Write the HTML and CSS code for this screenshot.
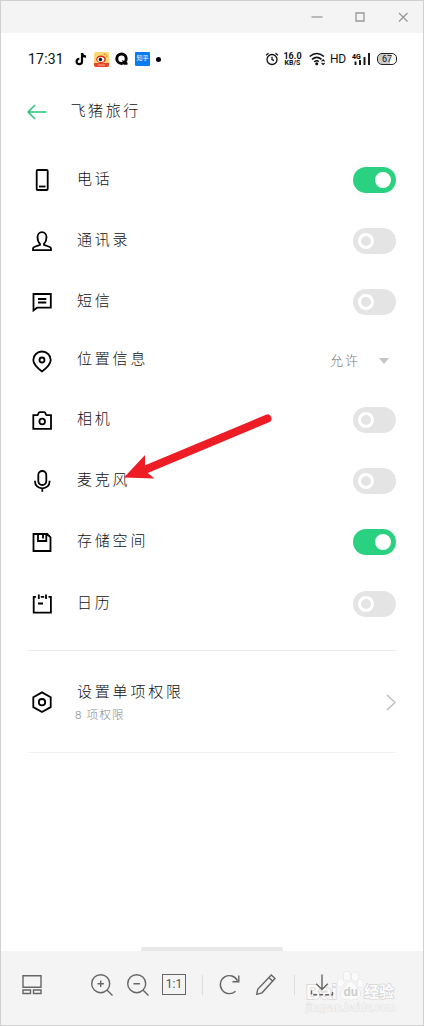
FILE: index.html
```html
<!DOCTYPE html>
<html lang="zh-CN">
<head>
    <meta charset="UTF-8">
    <meta name="viewport" content="width=device-width, initial-scale=1.0">
    <title>飞猪旅行</title>
    <link rel="stylesheet" href="styles.css">
</head>
<body>
<div class="window">
    <div class="titlebar">
        <svg width="12" height="12" viewBox="0 0 12 12"><path d="M.5 6h11"/></svg>
        <svg width="12" height="12" viewBox="0 0 12 12"><path d="M2 2h8v8H2z"/></svg>
        <svg width="12" height="12" viewBox="0 0 12 12"><path d="M2 2l8.500 8.500M10.500 2L2 10.500"/></svg>
    </div>

    <main class="screen">
        <div class="status">
            <span class="time">17:31</span>
            <svg class="app-tiktok" width="12" height="14" viewBox="0 0 12 14"><path d="M7 1v8.500a2.700 2.700 0 1 1-2.700-2.700M7 1c.3 2.200 1.700 3.500 4 3.600" fill="none" stroke="#000" stroke-width="2.200"/></svg>
            <svg class="app-weibo" width="15" height="15" viewBox="0 0 15 15">
                <rect width="15" height="15" rx="2" fill="#fbd774"/>
                <path d="M0 11h15v2a2 2 0 0 1-2 2H2a2 2 0 0 1-2-2z" fill="#e8452c"/>
                <ellipse cx="7" cy="7.200" rx="4.800" ry="3.800" fill="#dc2c1c"/>
                <ellipse cx="6.800" cy="7.500" rx="3.500" ry="2.500" fill="#fff"/>
                <circle cx="6.500" cy="7.500" r="1.700" fill="#111"/>
                <path d="M9.500 2.200q3.500-.7 3.300 3" fill="none" stroke="#ee8a24"/>
                <path d="M4 13h7" stroke="#f7b58f"/>
            </svg>
            <svg class="app-q" width="14" height="14" viewBox="0 0 14 14"><circle cx="6.500" cy="6.700" r="4.700" fill="none" stroke="#000" stroke-width="3"/><path d="M7 8l5.500 2.500v2.300H9z"/></svg>
            <span class="app-zhihu">知乎</span>
            <span class="more-dot"></span>

            <svg class="alarm" width="14" height="14" viewBox="0 0 14 14" fill="none" stroke="#111" stroke-width="1.300"><circle cx="7" cy="7.500" r="5"/><path d="M7 4.700v3l2 1M1 3.300l2.500-2M13 3.300l-2.500-2"/></svg>
            <span class="speed"><b>16.0</b><b>KB/S</b></span>
            <svg class="wifi" width="17" height="14" viewBox="0 0 17 14" fill="none" stroke="#111" stroke-width="1.600"><path d="M.7 4.500q7-6 14.300 0M3 7.300q4.800-4 9.500 0M5.300 9.800q2.500-2 4.500-.2"/><circle cx="7.700" cy="11.800" r=".7"/><path d="M12.600 9.400l1.500-1.500 1.500 1.500M12.600 11l1.500 1.500 1.500-1.500" stroke-width="1.100"/></svg>
            <span class="hd">HD</span>
            <svg class="signal" width="19" height="14" viewBox="0 0 19 14"><text x="0" y="7">4G</text><path d="M3.500 9.500v3.500M8 8v5M12.500 5v8M17 1v12" stroke="#111" stroke-width="1.900"/></svg>
            <span class="battery">67</span>
        </div>

        <header class="header">
            <svg width="20" height="16" viewBox="0 0 20 16"><path d="M19.500 8H1M8 1L1 8l7 7"/></svg>
            <h1>飞猪旅行</h1>
        </header>

        <ul class="list">
            <li class="row">
                <svg class="icon" viewBox="0 0 24 24"><rect x="6.700" y="2" width="11" height="20" rx="1"/><path d="M9 18.500h6.500"/></svg>
                <span class="name">电话</span><span class="switch on"></span>
            </li>
            <li class="row">
                <svg class="icon" viewBox="0 0 24 24"><path d="M10 14.800C8.300 13.200 7.500 10.800 7.500 8.300a4.500 5.200 0 0 1 9 0c0 2.500-.8 4.900-2.500 6.500v1l5.800 2.200c1 .4 1.200 1 1.200 1.800V21.200H3v-1.400c0-.8.300-1.400 1.200-1.800L10 15.800z"/></svg>
                <span class="name">通讯录</span><span class="switch"></span>
            </li>
            <li class="row">
                <svg class="icon" viewBox="0 0 24 24"><path d="M3.500 4h17.300v13.700H7l-3.500 2.800zM8 9h8.300M8 12.500h8.300"/></svg>
                <span class="name">短信</span><span class="switch"></span>
            </li>
            <li class="row row-select">
                <svg class="icon" viewBox="0 0 24 24"><path d="M12 22.400C8.300 19.700 3.300 15.700 3.300 11a8.700 8.500 0 0 1 17.400 0c0 4.700-5 8.700-8.700 11.400z"/><circle cx="12" cy="11" r="2.500"/></svg>
                <span class="name">位置信息</span><span class="value">允许</span><span class="caret"></span>
            </li>
            <li class="row">
                <svg class="icon" viewBox="0 0 24 24"><path d="M3.300 7.200h4c1 0 1-3 2.400-3h4.600c1.400 0 1.400 3 2.400 3h4.300v13.600H3.300z"/><circle cx="12.200" cy="13.500" r="2.800"/></svg>
                <span class="name">相机</span><span class="switch"></span>
            </li>
            <li class="row">
                <svg class="icon" viewBox="0 0 24 24"><rect x="8.300" y="2" width="8" height="14" rx="4"/><path d="M5 11.800v.8c0 4 3.200 6.700 7.300 6.700s7.300-2.700 7.300-6.700v-.8M12.300 19.300v3.500"/></svg>
                <span class="name">麦克风</span><span class="switch"></span>
            </li>
            <li class="row">
                <svg class="icon" viewBox="0 0 24 24"><path d="M3.500 4h13.700l3.300 3.300v13.700h-17zM8 4v7h8.300V4M13 4.500v4"/></svg>
                <span class="name">存储空间</span><span class="switch on"></span>
            </li>
            <li class="row">
                <svg class="icon" viewBox="0 0 24 24"><path d="M6 4.800H3.700v15.800h17.200V4.800H18.500M8.800 2.600V7M16 2.600V7M10.800 4.800h3.400M8 11.500h5"/></svg>
                <span class="name">日历</span><span class="switch"></span>
            </li>
        </ul>

        <section class="single">
            <svg class="icon" viewBox="0 0 24 24"><path d="M12 2.400l8.700 4.900v9.800L12 22l-8.700-4.900V7.300z"/><circle cx="12" cy="12.200" r="3.200"/></svg>
            <div class="single-text">
                <span class="name">设置单项权限</span>
                <small>8 项权限</small>
            </div>
            <svg class="chevron" width="10" height="17" viewBox="0 0 10 17"><path d="M1 1l8 7.500-8 7.500"/></svg>
        </section>

        <div class="handle"></div>

        <svg class="pointer" width="152" height="70" viewBox="0 0 152 70"><path d="M147.500 7.500L22 60" stroke="#ee1c25" stroke-width="8" stroke-linecap="round"/><path d="M4 66.500L25 44v10l1.500 7 8 6.500z" fill="#ee1c25"/></svg>
    </main>

    <footer class="toolbar">
        <svg class="tool thumbs" viewBox="0 0 24 24"><path d="M3 2.700h18v11.600H3zM3 17h7.500v3.500H3zM13.500 17H21v3.500h-7.500z"/></svg>
        <svg class="tool" viewBox="0 0 24 24"><circle cx="10.700" cy="10.700" r="9"/><path d="M17.200 17.200l5.300 5.300M10.700 7.500v6.400M7.500 10.700h6.400"/></svg>
        <svg class="tool" viewBox="0 0 24 24"><circle cx="10.700" cy="10.700" r="9"/><path d="M17.200 17.200l5.300 5.300M7.500 10.700h6.400"/></svg>
        <span class="ratio">1:1</span>
        <span class="sep"></span>
        <svg class="tool" viewBox="0 0 24 24"><path d="M17.500 18.200a9 9 0 1 1 2-10.400M20.800 2.500v6.300h-6.300"/></svg>
        <svg class="tool" viewBox="0 0 24 24"><path d="M2.700 21.300l1-5L17.300 2l3.700 3.500L8 19.800zM14.800 4.500l3.800 3.500"/></svg>
        <span class="sep"></span>
        <svg class="tool download" viewBox="0 0 24 24"><path d="M12 1.500v15M6.200 10.700l5.800 5.800 5.800-5.800"/><path d="M1.500 17.500v4.300h21v-4.300" stroke-dasharray="4 2"/></svg>

        <div class="watermark">
            <div class="wm-logo">
                <span>Bai</span>
                <svg width="27" height="30" viewBox="0 0 27 30"><ellipse cx="3.700" cy="12" rx="3.200" ry="4"/><ellipse cx="10" cy="5" rx="3.500" ry="4.500"/><ellipse cx="18" cy="5.500" rx="3.500" ry="4.500"/><ellipse cx="23.500" cy="12.500" rx="3.200" ry="4"/><path d="M13.500 11c3.500 0 4.500 3.500 7 6s3.500 4 2.700 7c-1 4-4.700 4.700-9.700 4.700S5 28 4 24.500c-1-3 .5-5 3-7.500s3-6 6.500-6z"/><text x="6.500" y="25">du</text></svg>
                <span>经验</span>
            </div>
            <div class="wm-url">jingyan.baidu.com</div>
        </div>
    </footer>
</div>
</body>
</html>
```
FILE: styles.css
```css
* {
    box-sizing: border-box;
}
html, body {
    margin: 0;
}
body {
    font-family: Roboto, "Noto Sans CJK SC", sans-serif;
    color: #111;
}
svg {
    display: block;
    flex: none;
}
.window {
    width: 424px;
    height: 1026px;
    border: 1px solid #d0d0d0;
    background: #fff;
    display: flex;
    flex-direction: column;
    overflow: hidden;
}
.titlebar {
    height: 32px;
    padding: 0 14px 1px 0;
    background: #f4f4f4;
    display: flex;
    align-items: center;
    justify-content: flex-end;
    gap: 31px;
}
.titlebar svg {
    fill: none;
    stroke: #999;
    stroke-width: 1.3;
}
.screen {
    position: relative;
    flex: 1;
    display: flex;
    flex-direction: column;
}

/* phone status bar */
.status {
    height: 52px;
    padding: 0 26px 0 27px;
    display: flex;
    align-items: center;
}
.time {
    width: 47px;
    font-size: 14px;
    letter-spacing: .2px;
}
.app-weibo {
    margin-left: 7px;
}
.app-q {
    margin-left: 6px;
}
.app-zhihu {
    width: 15px;
    height: 14px;
    margin-left: 6px;
    border-radius: 1px;
    background: #0a7cf0;
    color: #fff;
    font-size: 6px;
    line-height: 12px;
    text-align: center;
}
.more-dot {
    width: 5px;
    height: 5px;
    margin-left: 6px;
    border-radius: 50%;
    background: #000;
}
.alarm {
    margin-left: auto;
}
.speed {
    width: 19px;
    margin-left: 4px;
    text-align: center;
}
.speed b {
    display: block;
    font-size: 9px;
    line-height: 8px;
}
.speed b + b {
    font-size: 7px;
    line-height: 7px;
}
.wifi {
    margin-left: 7px;
}
.hd {
    width: 17px;
    margin-left: 4px;
    font-size: 12px;
    letter-spacing: -.3px;
}
.signal {
    margin-left: 5px;
}
.signal text {
    font-size: 7px;
    font-weight: bold;
}
.battery {
    width: 20px;
    height: 12px;
    margin-left: 6px;
    border: 1.500px solid #222;
    border-radius: 5px;
    background: linear-gradient(90deg, #ccc 67%, #fff 67%);
    font-size: 9px;
    line-height: 10px;
    text-align: center;
}

.header {
    height: 64.400px;
    padding: 18.500px 0 0 25.500px;
    display: flex;
    align-items: flex-start;
}
.header svg {
    fill: none;
    stroke: #25c578;
    stroke-width: 1.5;
}
h1, .name {
    margin: 0;
    font-size: 15px;
    font-weight: 300;
    line-height: 20px;
    letter-spacing: 2.800px;
}
h1 {
    margin: -3px 0 0 24px;
    letter-spacing: 2.600px;
}

/* permissions */
.list {
    margin: 0 27px;
    padding: 0 0 15.600px;
    border-bottom: 1px solid #e9e9e9;
    list-style: none;
}
.row {
    height: 61.200px;
    display: flex;
    align-items: center;
}
.row-select {
    height: 56.400px;
}
.icon {
    width: 24px;
    height: 24px;
    margin-left: 2px;
    fill: none;
    stroke: #000;
    stroke-width: 1.800;
}
.row .name {
    margin: -2px auto 0 23px;
}
.row-select .name {
    margin-top: -4px;
}
.switch {
    width: 43px;
    height: 26px;
    padding: 5px;
    border-radius: 13px;
    background: #e4e4e4;
}
.switch::before {
    content: "";
    display: block;
    box-sizing: border-box;
    width: 16px;
    height: 16px;
    border: 3.500px solid #fff;
    border-radius: 50%;
}
.switch.on {
    background: #2ad181;
}
.switch.on::before {
    margin-left: 17px;
    background: #fff;
}
.value {
    margin: -3px 19px 0 0;
    color: #777;
    font-size: 13px;
    font-weight: 300;
    letter-spacing: 2px;
}
.caret {
    margin-right: 7px;
    border: 5px solid transparent;
    border-top: 6px solid #c4c4c4;
    border-bottom: 0;
}
.single {
    height: 102px;
    margin: 0 27px;
    padding-top: 2px;
    border-bottom: 1px solid #f1f1f1;
    display: flex;
    align-items: center;
}
.single-text {
    margin: 5px auto 0 21px;
    display: flex;
    flex-direction: column;
}
.single .name {
    margin-left: 2px;
}
.single small {
    color: #888;
    font-size: 11.500px;
    font-weight: 300;
    line-height: 26px;
    letter-spacing: 1.200px;
}
.chevron {
    fill: none;
    stroke: #bbb;
    stroke-width: 1.3;
}
.handle {
    width: 142px;
    height: 4px;
    margin: auto auto 0;
    border-radius: 2px 2px 0 0;
    background: #e8e8e8;
}
/* red arrow over the microphone row */
.pointer {
    position: absolute;
    left: 119px;
    top: 378px;
}

.toolbar {
    position: relative;
    height: 74px;
    padding: 0 0 7px 19px;
    background: #f4f4f4;
    display: flex;
    align-items: center;
    gap: 12px;
}
.tool {
    width: 24px;
    height: 24px;
    fill: none;
    stroke: #666;
    stroke-width: 1.4;
}
.thumbs {
    margin-right: 34px;
}
.ratio {
    width: 24px;
    height: 21px;
    border: 1.500px solid #666;
    color: #555;
    font-size: 12px;
    line-height: 19px;
    text-align: center;
}
.sep {
    width: 1px;
    height: 20px;
    margin: 0 3px 0 4px;
    background: #ddd;
}
.watermark {
    position: absolute;
    left: 305px;
    top: 20px;
    color: #fcfcfc;
    font-family: "Liberation Sans", "Noto Sans CJK SC", sans-serif;
    font-weight: bold;
    -webkit-text-stroke: 1.500px #d6d6d6;
    paint-order: stroke fill;
}
/* the download icon stays readable through the mark */
.download {
    position: relative;
    z-index: 1;
}
.wm-logo {
    display: flex;
    align-items: flex-end;
    font-size: 15px;
    line-height: 18px;
}
.wm-logo span:first-child {
    width: 31px;
    font-size: 20px;
}
.wm-logo svg {
    fill: #fafafa;
    stroke: #d8d8d8;
    stroke-width: .8;
}
.wm-logo text {
    fill: #ccc;
    stroke: none;
    font-size: 12px;
    -webkit-text-stroke: 0;
}
.wm-url {
    font-size: 10.500px;
    line-height: 13px;
    font-weight: normal;
    letter-spacing: .3px;
    -webkit-text-stroke: 1px #dedede;
}
```
